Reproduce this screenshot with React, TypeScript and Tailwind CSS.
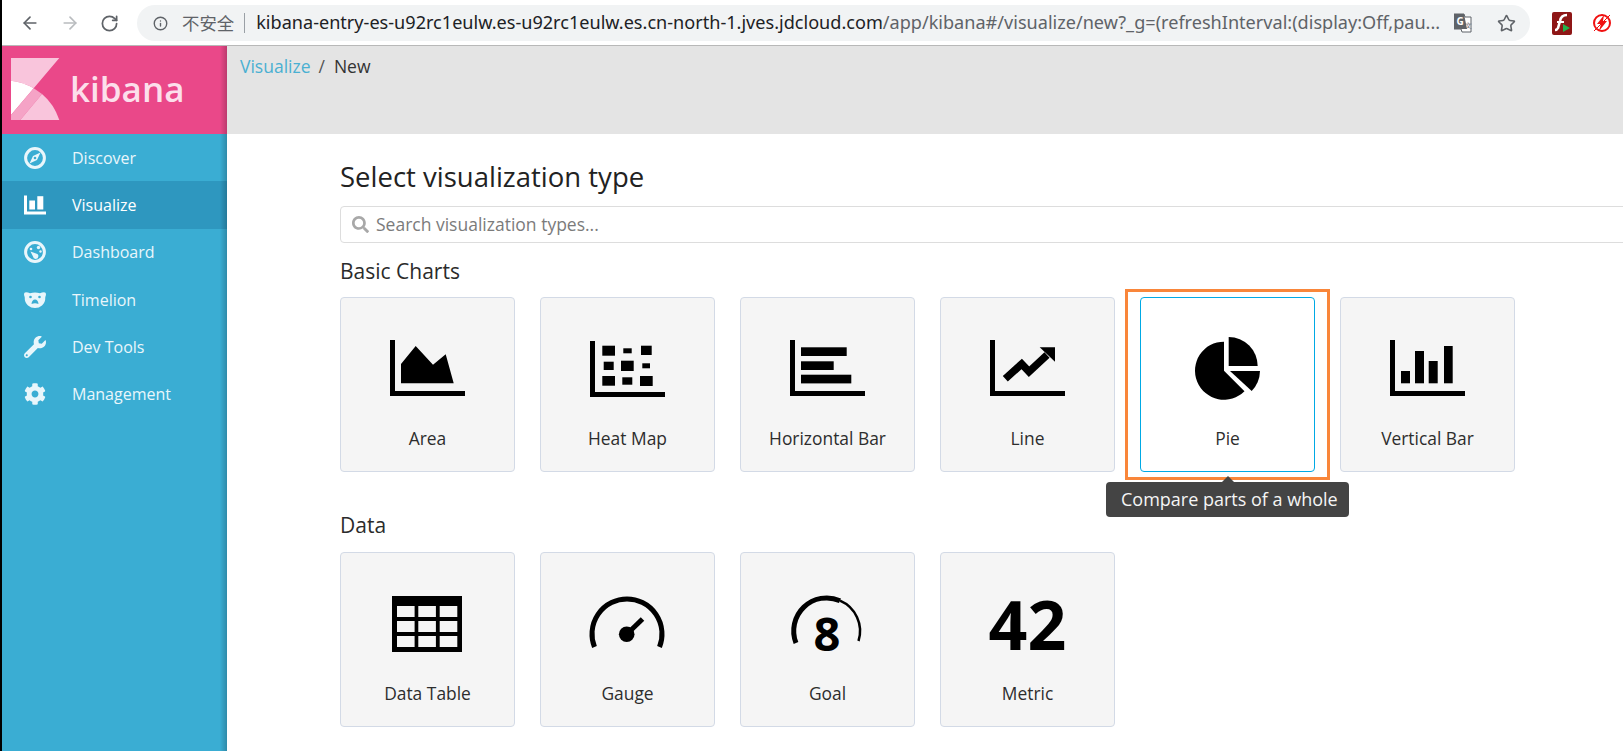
import React from "react";
import { ArrowLeft, ArrowRight, RotateCw, Info, Star } from "lucide-react";
import { FaWrench, FaCog, FaSearch } from "react-icons/fa";

const Axes = ({ y = 43 }: { y?: number }) => (
  <>
    <rect x="50" y={y} width="5" height="56" />
    <rect x="50" y={y + 51} width="75" height="5" />
  </>
);

const AreaIcon = () => (
  <>
    <Axes />
    <polygon points="61,67 75.7,49 93,67.7 105.7,57.3 113.7,86.3 61,86.3" />
  </>
);

const HeatIcon = () => (
  <>
    <Axes y={44} />
    <rect x="62.3" y="48.7" width="12.7" height="10" />
    <rect x="83.3" y="51.3" width="8.4" height="5" />
    <rect x="101" y="48.7" width="10.7" height="9.3" />
    <rect x="63.7" y="64.7" width="10" height="8.3" />
    <rect x="81" y="63.7" width="12.7" height="10.3" />
    <rect x="102.3" y="66.3" width="7.7" height="5" />
    <rect x="62.3" y="79" width="12.7" height="9.7" />
    <rect x="82.3" y="80.3" width="10" height="7.4" />
    <rect x="100" y="79" width="12.7" height="10" />
  </>
);

const HBarIcon = () => (
  <>
    <Axes />
    <rect x="61" y="50.3" width="45.7" height="8.7" />
    <rect x="61" y="64.3" width="32.7" height="8.7" />
    <rect x="61" y="77.7" width="50.3" height="8.7" />
  </>
);

const LineIcon = () => (
  <>
    <Axes />
    <polyline
      points="65.3,81.7 81.7,67 89,74.7 107,58"
      fill="none"
      stroke="#000"
      strokeWidth="7.5"
    />
    <polygon points="99.7,50.3 115,50.3 115,64.7" />
  </>
);

const PieIcon = () => (
  <>
    <path d="M84 44.7A29 29 0 1 0 104.5 94.2L84 73.7Z" />
    <path d="M88.7 40A29 29 0 0 1 117.7 69L88.7 69Z" />
    <path d="M90 74L120 74A30 30 0 0 1 111.7 94Z" />
  </>
);

const VBarIcon = () => (
  <>
    <Axes />
    <rect x="61" y="74" width="9" height="12.3" />
    <rect x="75" y="54" width="9" height="32.3" />
    <rect x="88.7" y="64" width="9" height="22.3" />
    <rect x="104" y="49" width="8.7" height="37.3" />
  </>
);

const TableIcon = () => (
  <>
    <rect x="52" y="44" width="70" height="56" />
    {[54, 69, 84].map((y) =>
      [57, 78.3, 99.7].map((x) => (
        <rect key={`${x}-${y}`} x={x} y={y} width="17.6" height="11" fill="#f5f5f5" />
      ))
    )}
  </>
);

const GaugeIcon = () => (
  <>
    <path d="M54.5 95A35 35 0 1 1 119.5 95" fill="none" stroke="#000" strokeWidth="5" />
    <circle cx="86.7" cy="82.3" r="7.8" />
    <line x1="87" y1="82" x2="102.5" y2="67" stroke="#000" strokeWidth="5" />
  </>
);

const GoalIcon = () => (
  <>
    <path d="M56 91A33 33 0 0 1 100 48.7" fill="none" stroke="#000" strokeWidth="5" />
    <path d="M100 48.7A33 33 0 0 1 118.5 89" fill="none" stroke="#000" strokeWidth="2.5" />
    <text x="87" y="99" textAnchor="middle" fontSize="47" fontWeight="700">
      8
    </text>
  </>
);

const MetricIcon = () => (
  <text x="87.5" y="97.5" textAnchor="middle" fontSize="68" fontWeight="700">
    42
  </text>
);

const BASIC = [
  { name: "Area", icon: <AreaIcon /> },
  { name: "Heat Map", icon: <HeatIcon /> },
  { name: "Horizontal Bar", icon: <HBarIcon /> },
  { name: "Line", icon: <LineIcon /> },
  { name: "Pie", icon: <PieIcon />, active: true },
  { name: "Vertical Bar", icon: <VBarIcon /> },
];

const DATA = [
  { name: "Data Table", icon: <TableIcon /> },
  { name: "Gauge", icon: <GaugeIcon /> },
  { name: "Goal", icon: <GoalIcon /> },
  { name: "Metric", icon: <MetricIcon /> },
];

const Card = ({
  name,
  icon,
  active,
}: {
  name: string;
  icon: React.ReactNode;
  active?: boolean;
}) => (
  <div
    className={`relative w-[175px] h-[175px] shrink-0 rounded border ${
      active ? "bg-white border-[#00a9e5]" : "bg-[#f5f5f5] border-[#d3dae6]"
    }`}
  >
    <svg viewBox="1 1 173 110" className="block w-[173px] h-[110px] overflow-visible" fill="#000">
      {icon}
    </svg>
    <div className="mt-[18px] text-center text-[17.4px] leading-6 text-[#2d2d2d]">{name}</div>
    {active && (
      <>
        {/* orange annotation box */}
        <div className="absolute -left-[16px] -top-[9px] w-[205px] h-[191px] border-[3px] border-[#f9863a]" />
        <div className="absolute -left-[35px] top-[184px] w-[243px] h-[35px] z-10 rounded bg-[#444444] text-[#f5f5f5] text-[18px] leading-[35px] pl-[15px] whitespace-nowrap">
          Compare parts of a whole
        </div>
        <div className="absolute left-[81px] top-[178px] w-0 h-0 z-10 border-x-[6px] border-x-transparent border-b-[6px] border-b-[#444444]" />
      </>
    )}
  </div>
);

const KibanaLogo = () => (
  <svg viewBox="0 0 50 64" className="w-[50px] h-[64px] shrink-0">
    <path d="M0 0L48.3 0L22.7 30.3Q12 24 0 22.7Z" fill="#f9c5dc" />
    <path d="M0 22.7Q12 24 22.7 30.3L0 57Z" fill="#fff" />
    <path d="M22.7 30.3L31 36L9.3 62L0 62L0 57Z" fill="#f5a3c6" />
    <path d="M31 36Q43 46 48.3 62L9.3 62Z" fill="#f9c5dc" />
  </svg>
);

const CompassIcon = () => (
  <svg viewBox="0 0 22 22" className="w-[22px] h-[22px]">
    <circle cx="11" cy="11" r="9.4" fill="none" stroke="currentColor" strokeWidth="3" />
    <path d="M16.5 5.5L13 13L5.5 16.5L9 9Z" fill="currentColor" />
    <circle cx="11" cy="11" r="1.3" fill="#3aadd3" />
  </svg>
);

const BarsIcon = () => (
  <svg viewBox="0 0 22 22" className="w-[22px] h-[22px]">
    <path d="M0 1.5h3V17.5H22V20.5H0Z" fill="currentColor" />
    <rect x="5.3" y="6.5" width="5.7" height="9" fill="currentColor" />
    <rect x="13.3" y="2.2" width="6" height="13.3" fill="currentColor" />
  </svg>
);

const DashIcon = () => (
  <svg viewBox="0 0 22 22" className="w-[22px] h-[22px]">
    <circle cx="11" cy="11" r="9.4" fill="none" stroke="currentColor" strokeWidth="3" />
    <circle cx="14.5" cy="6.5" r="1.7" fill="currentColor" />
    <circle cx="16.5" cy="10.5" r="1.2" fill="currentColor" />
    <circle cx="7" cy="8" r="1.3" fill="currentColor" />
    <path d="M6.5 10.5L12 12.5A2.7 2.7 0 1 1 9 15.5Z" fill="currentColor" />
  </svg>
);

const BearIcon = () => (
  <svg viewBox="0 0 22 22" className="w-[22px] h-[22px]">
    <path
      d="M0 5Q0 3.2 2 3.2Q4 3.2 6 4.2Q11 3 16 4.2Q18 3.2 20 3.2Q22 3.2 22 5Q22 6.5 21.3 8Q21.5 13.5 18 16.5Q15 19 11 19Q7 19 4 16.5Q0.5 13.5 0.7 8Q0 6.5 0 5Z"
      fill="currentColor"
    />
    <circle cx="6.5" cy="8" r="1.3" fill="#3aadd3" />
    <circle cx="15.5" cy="8" r="1.3" fill="#3aadd3" />
    <path d="M7.5 15Q8 10.5 11 10.5Q14 10.5 14.5 15Q11 13.5 7.5 15Z" fill="#3aadd3" />
  </svg>
);

const NAV = [
  { name: "Discover", icon: <CompassIcon /> },
  { name: "Visualize", icon: <BarsIcon />, active: true },
  { name: "Dashboard", icon: <DashIcon /> },
  { name: "Timelion", icon: <BearIcon /> },
  { name: "Dev Tools", icon: <FaWrench className="w-[22px] h-[22px]" /> },
  { name: "Management", icon: <FaCog className="w-[22px] h-[22px]" /> },
];

export default function App() {
  return (
    <div className="flex w-[1623px] h-[751px] overflow-hidden bg-white font-['Open_Sans',sans-serif]">
      <div className="w-[2px] shrink-0 bg-black" />
      <div className="flex-1 min-w-0 flex flex-col">
        {/* browser toolbar */}
        <div className="h-[46px] shrink-0 flex items-center border-b border-[#b8b8b8] pt-[1px]">
          <div className="w-[135px] shrink-0 flex items-center pl-[18px] gap-[20px] text-[#5f6368]">
            <ArrowLeft size={20} strokeWidth={2} />
            <ArrowRight size={20} strokeWidth={2} className="text-[#b9bcbf]" />
            <RotateCw size={19} strokeWidth={2.2} />
          </div>
          <div className="w-[1393px] h-[36px] shrink-0 flex items-center rounded-full bg-[#f1f3f4] pl-[16px]">
            <Info size={15} strokeWidth={2.2} className="text-[#5f6368] shrink-0" />
            <span className="ml-[14px] text-[17.4px] text-[#5f6368] font-['Noto_Sans_CJK_SC',sans-serif]">
              不安全
            </span>
            <span className="ml-[10px] w-px h-[20px] bg-[#9aa0a6]" />
            <span className="ml-[11px] w-[1190px] shrink-0 text-[18.1px] whitespace-nowrap font-['Noto_Sans',sans-serif] text-[#5f6368]">
              <span className="text-[#202124]">kibana-entry-es-u92rc1eulw.es-u92rc1eulw.es.cn-north-1.jves.jdcloud.com</span>
              /app/kibana#/visualize/new?_g=(refreshInterval:(display:Off,pau...
            </span>
            <svg viewBox="0 0 18 20" className="ml-[8px] w-[18px] h-[20px] shrink-0">
              <path d="M0 1h10l1 3h6v15H8l-1-3H0Z" fill="#fff" stroke="#5f6368" />
              <path d="M0 1h10l3 15H0Z" fill="#5f6368" />
              <text x="2.5" y="12" fontSize="10" fontWeight="700" fill="#fff">G</text>
              <text x="11" y="15" fontSize="7" fill="#5f6368">文</text>
            </svg>
            <Star size={19} strokeWidth={2} className="ml-[25px] text-[#5f6368] shrink-0" />
          </div>
          <svg viewBox="0 0 20 23" className="ml-[22px] w-[20px] h-[23px] shrink-0">
            <rect width="20" height="23" rx="2" fill="#8e1616" />
            <path d="M15 3Q9 3 8 9L6 16Q5 18 3 18" fill="none" stroke="#fff" strokeWidth="2.6" />
            <path d="M5 10H12" stroke="#fff" strokeWidth="2" />
            <polygon points="11,12 18,16 11,20" fill="#22b14c" />
          </svg>
          <svg viewBox="0 0 20 20" className="ml-[20px] w-[20px] h-[20px] shrink-0">
            <circle cx="10" cy="10" r="8" fill="none" stroke="#f01010" strokeWidth="2" />
            <path d="M12 2L5 11h4l-2 7 8-10h-4Z" fill="#f01010" />
            <line x1="2" y1="18" x2="18" y2="2" stroke="#f01010" strokeWidth="1" />
          </svg>
        </div>

        <div className="flex-1 min-h-0 flex">
          {/* sidebar */}
          <div className="relative w-[225px] shrink-0 flex flex-col bg-[#3aadd3]">
            <div className="h-[88px] shrink-0 flex items-center pl-[9px] bg-[#ea4889]">
              <KibanaLogo />
              <span className="ml-[9px] -mt-[3px] text-[35px] leading-none font-semibold text-[#fcdfeb]">
                kibana
              </span>
            </div>
            {NAV.map((item) => (
              <div
                key={item.name}
                className={`h-[47.3px] shrink-0 flex items-center pl-[22px] text-[#e9f6fb] ${
                  item.active ? "bg-[#2e97bf] text-white" : ""
                }`}
              >
                <span className="w-[48px] shrink-0">{item.icon}</span>
                <span className="text-[16px]">{item.name}</span>
              </div>
            ))}
            <div className="absolute right-0 top-0 bottom-0 w-[7px] bg-linear-to-r from-transparent to-black/20" />
          </div>

          {/* main */}
          <div className="flex-1 min-w-0 flex flex-col">
            <div className="h-[88px] shrink-0 bg-[#e4e4e4] pl-[13px] pt-[8px] text-[17.5px] leading-6">
              <span className="text-[#4ab0d2]">Visualize</span>
              <span className="ml-[8px] text-[#555]">/</span>
              <span className="ml-[9px] text-[#333]">New</span>
            </div>
            <div className="pl-[113px]">
              <h1 className="mt-[23px] text-[27.5px] leading-[40px] text-[#222]">Select visualization type</h1>
              <div className="mt-[9px] w-[1400px] h-[37px] flex items-center rounded border border-[#dddddd] pl-[11px]">
                <FaSearch className="w-[17px] h-[17px] text-[#a8a8a8]" />
                <span className="ml-[7px] text-[17.5px] text-[#7b7b7b]">Search visualization types...</span>
              </div>
              <h2 className="mt-[12px] text-[21px] leading-[32px] text-[#2b2b2b]">Basic Charts</h2>
              <div className="mt-[10px] flex gap-[25px]">
                {BASIC.map((c) => (
                  <Card key={c.name} {...c} />
                ))}
              </div>
              <h2 className="mt-[37px] text-[21px] leading-[32px] text-[#2b2b2b]">Data</h2>
              <div className="mt-[11px] flex gap-[25px]">
                {DATA.map((c) => (
                  <Card key={c.name} {...c} />
                ))}
              </div>
            </div>
          </div>
        </div>
      </div>
    </div>
  );
}
